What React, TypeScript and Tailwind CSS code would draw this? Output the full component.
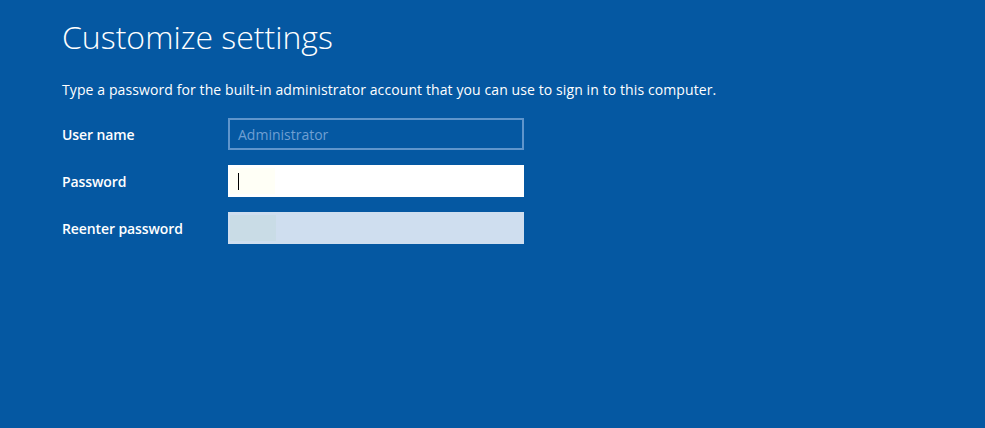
export default function App() {
  const rows = [
    { label: "User name", kind: "user" },
    { label: "Password", kind: "pw" },
    { label: "Reenter password", kind: "re" },
  ];

  return (
    <div className="w-[985px] h-[428px] bg-[#0558a2] text-white font-['Open_Sans',sans-serif] overflow-hidden">
      <div className="pl-[62px] pt-[15px]">
        <h1 className="text-[32px] font-light leading-[44px]">Customize settings</h1>
        <p className="mt-[21px] text-[14px] leading-[20px] tracking-[0.1px]">
          Type a password for the built-in administrator account that you can use to sign in to this computer.
        </p>
        <div className="mt-[18px] flex flex-col gap-[15px]">
          {rows.map((r) => (
            <div key={r.label} className="flex items-center h-[32px]">
              <span className="w-[166px] text-[14px] font-semibold tracking-[-0.1px]">{r.label}</span>
              {r.kind === "user" && (
                <div className="w-[296px] h-[32px] border-2 border-[#5f95cc] flex items-center pl-[8px] text-[14px] text-[#6f9fd2]">
                  Administrator
                </div>
              )}
              {r.kind === "pw" && (
                <div className="w-[296px] h-[32px] bg-white flex items-center pl-[2px]">
                  <div className="w-[45px] h-[26px] bg-[#fffff6] flex items-center pl-[8px]">
                    <div className="w-[1px] h-[17px] bg-black" />
                  </div>
                </div>
              )}
              {r.kind === "re" && (
                <div className="w-[296px] h-[32px] bg-[#cfdeef] flex items-center pl-[2px]">
                  <div className="w-[46px] h-[26px] bg-[#c9dce6]" />
                </div>
              )}
            </div>
          ))}
        </div>
      </div>
    </div>
  );
}
